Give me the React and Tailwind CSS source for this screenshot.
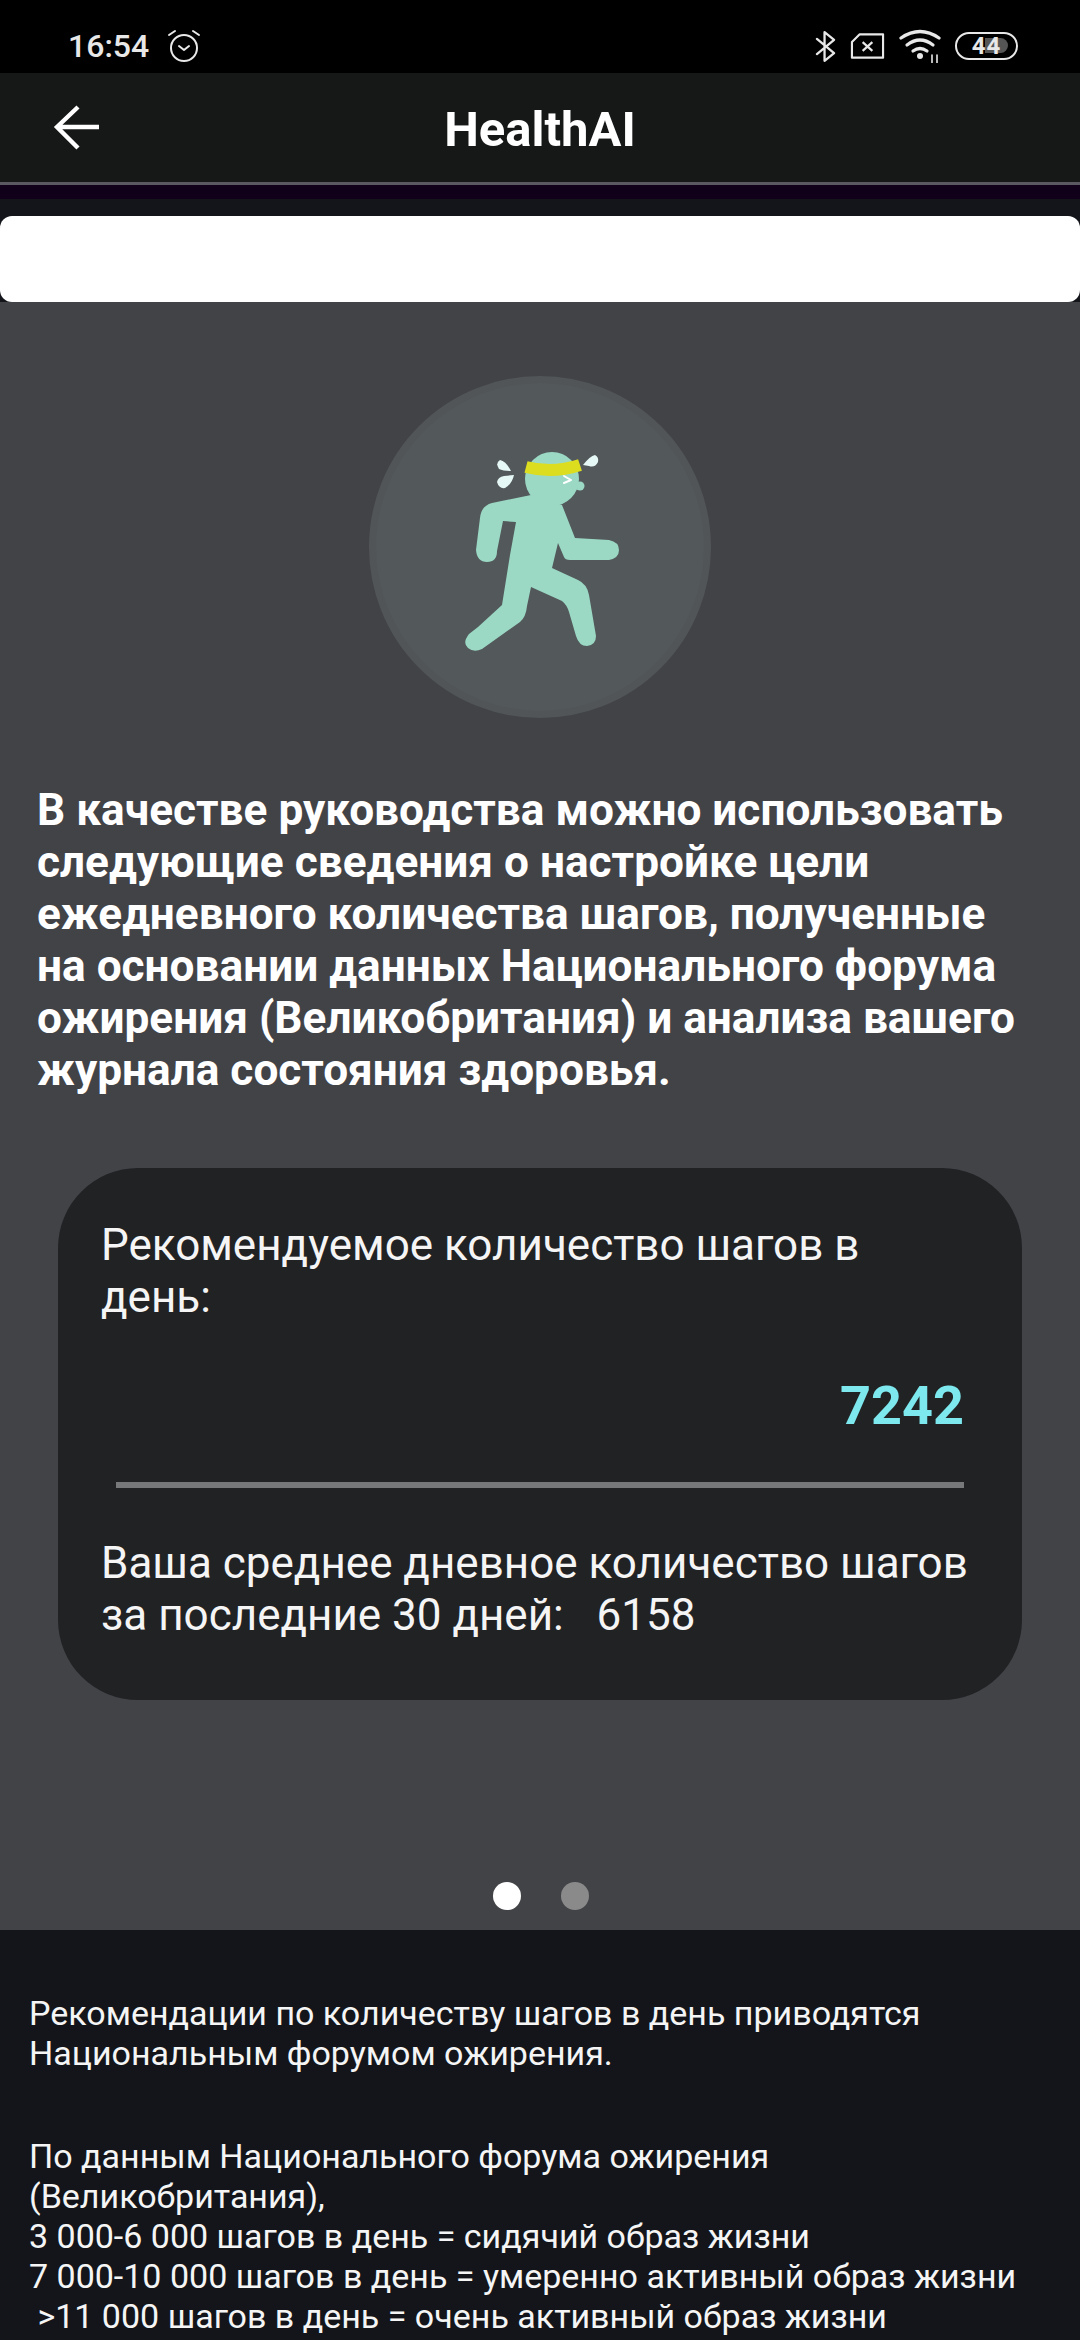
const font = { fontFamily: 'Roboto, sans-serif' };

function Runner() {
  return (
    <svg viewBox="0 0 380 360" className="w-[380px] h-[360px] absolute left-[-26px] top-[-23px]">
      <path
        fill="#9bd9c4"
        d="M181 135 L142 143 Q131 146 130 158 L126 190 Q127 202 137 202 Q147 202 147 191 L153 161 L166 162 L160 195 L152 245 L128 267 L119 274 Q112 283 118 288 Q124 293 132 289 L170 262 Q176 257 177 246 L181 227 L212 241 Q217 245 219 252 L226 276 Q229 286 237 286 Q246 285 246 276 L239 235 Q237 224 228 220 L202 208 L208 183 L214 197 Q215 200 220 200 L259 200 Q269 198 269 190 Q269 182 259 180 L225 178 L212 145 Z"
      />
      <circle cx="202" cy="119" r="27" fill="#9bd9c4" />
      <circle cx="230" cy="126" r="4.5" fill="#9bd9c4" />
      <path d="M176 107 Q203 114 230 105" fill="none" stroke="#dddd1f" strokeWidth="12" />
      <path d="M214 116 L221 120 L214 123" fill="none" stroke="#ffffff" strokeWidth="2" strokeLinecap="round" strokeLinejoin="round" />
      <path fill="#e6f8f6" d="M150 100 Q156 101 161 111 Q153 111 149 109 Q145 103 150 100 Z" />
      <path fill="#e6f8f6" d="M164 115 Q162 124 155 128 Q149 129 147 122 Q148 117 154 116 Z" />
      <path fill="#e6f8f6" d="M233 105 Q240 96 245 95 Q249 97 248 102 Q245 108 239 106 Z" />
    </svg>
  );
}

export default function App() {
  return (
    <div className="w-[1080px] h-[2340px] overflow-hidden flex flex-col bg-[#13151a] text-white" style={font}>
      <div className="h-[73px] shrink-0 bg-black flex items-center justify-between pl-[68px] pr-[62px] pt-[19px] text-[#e8e8e8]">
        <div className="flex items-center gap-[18px]">
          <span className="text-[32px] font-medium leading-none">16:54</span>
          <svg viewBox="0 0 34 34" className="w-[34px] h-[34px]" fill="none" stroke="currentColor" strokeLinecap="round" strokeLinejoin="round">
            <circle cx="17" cy="19" r="13" strokeWidth="2" />
            <path d="M12 17 L17 21 L22 17" strokeWidth="2" />
            <path d="M2 6 L8 2 M32 6 L26 2" strokeWidth="2" />
          </svg>
        </div>
        <div className="flex items-center gap-[14px]">
          <svg viewBox="0 0 22 34" className="w-[21px] h-[33px]" fill="none" stroke="currentColor" strokeWidth="2.4" strokeLinejoin="round" strokeLinecap="round">
            <path d="M2 9 L20 24 L10 32 L10 2 L20 10 L2 25" />
          </svg>
          <svg viewBox="0 0 36 28" className="w-[35px] h-[28px]" fill="none" stroke="currentColor">
            <path d="M10 2 L34 2 L34 26 L2 26 L2 10 Z" strokeWidth="2.2" strokeLinejoin="round" />
            <path d="M13 10 L23 19 M23 10 L13 19" strokeWidth="2.2" />
          </svg>
          <svg viewBox="0 0 42 34" className="w-[42px] h-[34px]" fill="none" stroke="currentColor" strokeLinecap="round">
            <path d="M2 9 Q21 -4 40 9" strokeWidth="3.2" />
            <path d="M8 16 Q21 6 34 16" strokeWidth="3.2" />
            <path d="M14 22 Q21 17 28 22" strokeWidth="3.2" />
            <circle cx="21" cy="27" r="3" fill="currentColor" stroke="none" />
            <path d="M33 26 V34 M38 26 V34" strokeWidth="1.6" />
          </svg>
          <div className="relative w-[63px] h-[28px] rounded-full border-[2.5px] border-[#e8e8e8] flex items-center justify-center">
            <div className="absolute left-[28px] top-[4px] w-[23px] h-[15px] rounded-r-full bg-[#555]"></div>
            <span className="relative text-[24px] font-bold leading-none tracking-[1px]">44</span>
          </div>
        </div>
      </div>

      <div className="h-[109px] shrink-0 bg-[#161717] relative flex items-center justify-center">
        <svg viewBox="0 0 48 48" className="absolute left-[52px] top-[31px] w-[48px] h-[48px]" fill="none" stroke="#ffffff" strokeWidth="4.4">
          <path d="M47 23 H5 M26 3 L5 23 L26 44" />
        </svg>
        <span className="text-[49px] font-bold leading-none mt-[3px]">HealthAI</span>
      </div>
      <div className="h-[3px] shrink-0 bg-[#5a5860]"></div>
      <div className="h-[14px] shrink-0 bg-[#10001a]"></div>
      <div className="h-[17px] shrink-0"></div>
      <div className="h-[86px] shrink-0 bg-white rounded-[12px]"></div>

      <div className="h-[1628px] shrink-0 bg-[#424347] flex flex-col items-center">
        <div className="relative w-[342px] h-[342px] mt-[74px] rounded-full bg-[#53585b] border-[7px] border-[#515557] box-border">
          <Runner />
        </div>
        <p className="w-full mt-[66px] px-[37px] text-[44.2px] font-bold leading-[52px] text-white whitespace-nowrap">
          В качестве руководства можно использовать<br />
          следующие сведения о настройке цели<br />
          ежедневного количества шагов, полученные<br />
          на основании данных Национального форума<br />
          ожирения (Великобритания) и анализа вашего<br />
          журнала состояния здоровья.
        </p>
        <div className="w-[964px] h-[532px] mt-[72px] rounded-[80px] bg-[#212224] pl-[43px] pr-[44px] pt-[51px] flex flex-col">
          <p className="text-[44px] leading-[52px] text-[#f5f5f5] whitespace-nowrap">
            Рекомендуемое количество шагов в<br />день:
          </p>
          <p className="text-right pr-[14px] mt-[53px] text-[54px] font-bold leading-[60px] text-[#7de8ee]">7242</p>
          <div className="h-[6px] ml-[15px] mr-[14px] mt-[46px] bg-[#77787a]"></div>
          <p className="mt-[49px] text-[44px] leading-[52px] text-[#f5f5f5] whitespace-pre">
            Ваша среднее дневное количество шагов{'\n'}за последние 30 дней:   6158
          </p>
        </div>
        <div className="flex gap-[40px] mt-[182px] ml-[1px]">
          <div className="w-[28px] h-[28px] rounded-full bg-white"></div>
          <div className="w-[28px] h-[28px] rounded-full bg-[#8a8a8a]"></div>
        </div>
      </div>

      <div className="flex-1 px-[29px] pt-[63px] text-[34px] leading-[40px] text-[#f5f5f5] whitespace-pre">
        <p>Рекомендации по количеству шагов в день приводятся{'\n'}Национальным форумом ожирения.</p>
        <p className="mt-[63px]">
          По данным Национального форума ожирения{'\n'}(Великобритания),{'\n'}3 000-6 000 шагов в день = сидячий образ жизни{'\n'}7 000-10 000 шагов в день = умеренно активный образ жизни{'\n'} {'>'}11 000 шагов в день = очень активный образ жизни
        </p>
      </div>
    </div>
  );
}
